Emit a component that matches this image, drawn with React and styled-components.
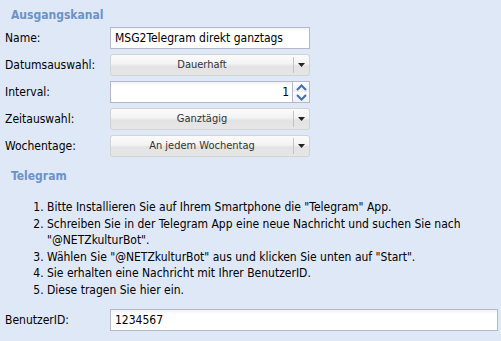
import styled, { createGlobalStyle } from "styled-components";

const GlobalStyle = createGlobalStyle`
  html, body {
    margin: 0;
    padding: 0;
    background: #dfe8f6;
  }
  body {
    font-family: "DejaVu Sans Condensed", "DejaVu Sans", sans-serif;
    font-size: 12px;
    color: #000;
  }
`;

export default function App() {
  const steps = [
    'Bitte Installieren Sie auf Ihrem Smartphone die "Telegram" App.',
    'Schreiben Sie in der Telegram App eine neue Nachricht und suchen Sie nach "@NETZkulturBot".',
    'Wählen Sie "@NETZkulturBot" aus und klicken Sie unten auf "Start".',
    "Sie erhalten eine Nachricht mit Ihrer BenutzerID.",
    "Diese tragen Sie hier ein.",
  ];

  return (
    <Page>
      <GlobalStyle />
      <Legend>Ausgangskanal</Legend>
      <Rows>
        <Row>
          <Label>Name:</Label>
          <TextInput>MSG2Telegram direkt ganztags</TextInput>
        </Row>
        <Row>
          <Label>Datumsauswahl:</Label>
          <Select value="Dauerhaft" />
        </Row>
        <Row>
          <Label>Interval:</Label>
          <Spinner>
            <SpinValue>1</SpinValue>
            <SpinButtons>
              <SpinBtn>
                <Chevron up />
              </SpinBtn>
              <SpinBtn>
                <Chevron />
              </SpinBtn>
            </SpinButtons>
          </Spinner>
        </Row>
        <Row>
          <Label>Zeitauswahl:</Label>
          <Select value="Ganztägig" />
        </Row>
        <Row>
          <Label>Wochentage:</Label>
          <Select value="An jedem Wochentag" />
        </Row>
      </Rows>
      <Legend $top={12}>Telegram</Legend>
      <Steps>
        {steps.map((s) => (
          <li key={s}>{s}</li>
        ))}
      </Steps>
      <Row>
        <Label>BenutzerID:</Label>
        <TextInput $wide>1234567</TextInput>
      </Row>
    </Page>
  );
}

function Select({ value }) {
  return (
    <SelectBox>
      <SelectText>{value}</SelectText>
      <SelectTrigger>
        <svg width="7" height="4" viewBox="0 0 7 4">
          <path d="M0 0h7L3.5 4z" fill="#222" />
        </svg>
      </SelectTrigger>
    </SelectBox>
  );
}

function Chevron({ up }) {
  return (
    <svg width="11" height="7" viewBox="0 0 11 7">
      <path
        d={up ? "M1 6L5.5 1.5L10 6" : "M1 1L5.5 5.5L10 1"}
        fill="none"
        stroke="#3d6fb8"
        strokeWidth="2"
      />
    </svg>
  );
}

const Page = styled.div`
  width: 501px;
  height: 341px;
  padding: 8px 0 0 5px;
  box-sizing: border-box;
  overflow: hidden;
`;

const Legend = styled.div`
  font-weight: bold;
  font-size: 12px;
  color: #6b93c7;
  height: 15px;
  line-height: 15px;
  padding-left: 6px;
  margin-top: ${(p) => p.$top || 0}px;
`;

const Rows = styled.div`
  display: flex;
  flex-direction: column;
  gap: 5px;
  margin-top: 4px;
`;

const Row = styled.div`
  display: flex;
  align-items: center;
  height: 22px;
`;

const Label = styled.div`
  width: 105px;
  flex: none;
  font-size: 12px;
`;

const TextInput = styled.div`
  box-sizing: border-box;
  width: ${(p) => (p.$wide ? 388 : 200)}px;
  height: 22px;
  line-height: 20px;
  padding: 0 4px;
  border: 1px solid #b5b8c8;
  background: linear-gradient(#f2f2f2, #fff 4px);
  font-size: 12px;
`;

const SelectBox = styled.div`
  box-sizing: border-box;
  width: 200px;
  height: 22px;
  display: flex;
  border: 1px solid #d3d3d3;
  border-radius: 3px;
  background: linear-gradient(#fbfbfb 0%, #f3f3f3 45%, #e3e3e3 55%, #e6e6e6 100%);
`;

const SelectText = styled.div`
  flex: 1;
  text-align: center;
  line-height: 20px;
  font-size: 11px;
  color: #333;
`;

const SelectTrigger = styled.div`
  width: 15px;
  display: flex;
  align-items: center;
  justify-content: center;
  border-left: 1px solid #c4c4c4;
  margin: 2px 0;
`;

const Spinner = styled.div`
  display: flex;
  width: 200px;
  height: 22px;
`;

const SpinValue = styled.div`
  flex: 1;
  box-sizing: border-box;
  border: 1px solid #b5b8c8;
  background: linear-gradient(#f2f2f2, #fff 4px);
  text-align: right;
  line-height: 20px;
  padding-right: 3px;
  font-size: 12px;
`;

const SpinButtons = styled.div`
  width: 17px;
  display: flex;
  flex-direction: column;
  border: 1px solid #b5b8c8;
  border-left: none;
  box-sizing: border-box;
`;

const SpinBtn = styled.div`
  flex: 1;
  display: flex;
  align-items: center;
  justify-content: center;
  background: linear-gradient(#fdfdfd, #eef0f4);
`;

const Steps = styled.ol`
  margin: 15px 0 11px;
  padding-left: 42px;
  width: 420px;
  font-size: 12px;
  line-height: 16.5px;
`;
